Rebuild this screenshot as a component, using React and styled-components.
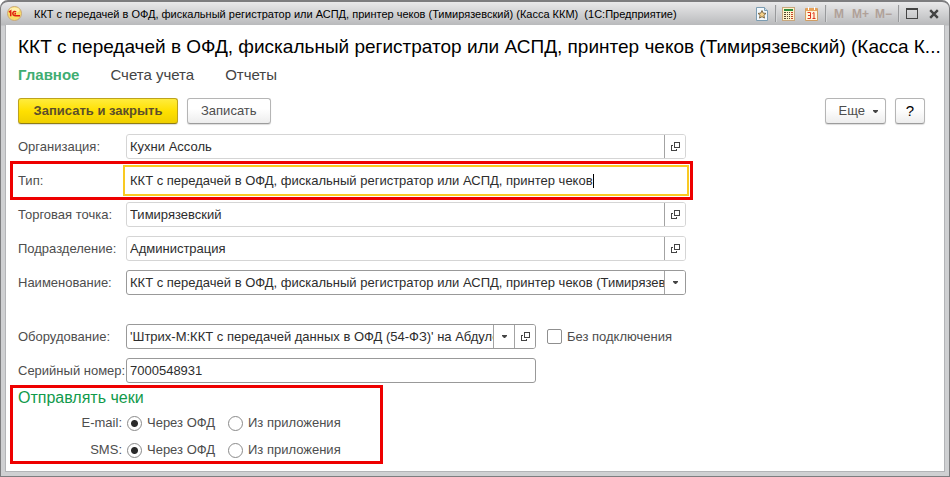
import React from "react";
import styled, { createGlobalStyle, css } from "styled-components";

const GlobalStyle = createGlobalStyle`
  *, *::before, *::after { box-sizing: border-box; }
  html, body, #root { height: 100%; }
  body { margin: 0; background: #fff; }
  body, button, input {
    font-family: "Liberation Sans", Arial, sans-serif;
    font-size: 13px;
    line-height: 16px;
  }
`;

const Window = styled.div`
  display: flex;
  flex-direction: column;
  min-height: 100%;
  padding: 0 4px 4px;
  border: 1px solid #7d7d7f;
  border-top-width: 2px;
  border-radius: 8px 8px 0 0;
  background: linear-gradient(#e9e9ea, #b9babc 23px, #cfd0d2 24px);
  overflow: hidden;
`;

const TitleBar = styled.header`
  display: flex;
  align-items: center;
  height: 23px;
  padding-left: 2px;
`;

const WindowTitle = styled.h1`
  flex: 1;
  min-width: 0;
  margin: 0 0 0 12px;
  overflow: hidden;
  white-space: pre;
  text-overflow: ellipsis;
  font-size: 11px;
  font-weight: 400;
  color: #000;
`;

const BarGroup = styled.div`
  display: flex;
  align-items: center;
  gap: ${(p) => p.$gap || 0}px;
  height: 17px;
  padding: 0 6px;
  ${(p) =>
    p.$divided &&
    css`
      border-left: 1px solid #98999b;
      box-shadow: inset 1px 0 #d6d7d9;
    `}
  &:last-child {
    padding-right: 4px;
  }
`;

const BarButton = styled.button`
  display: grid;
  place-items: center;
  min-width: 14px;
  height: 16px;
  padding: 0;
  border: 0;
  background: none;
  color: #b0a199;
  font-size: 12px;
  font-weight: 700;
`;

const Content = styled.main`
  flex: 1;
  padding: 11px 19px 7px 12px;
  border: 1px solid #b3b4b7;
  border-top: 0;
  background: #fff;
`;

const PageTitle = styled.h2`
  margin: 0 -18px 0 0;
  overflow: hidden;
  white-space: nowrap;
  font-size: 19px;
  line-height: 22px;
  font-weight: 400;
  color: #000;
`;

const Tabs = styled.nav`
  display: flex;
  gap: 31px;
  margin-top: 7px;
`;

const Tab = styled.a`
  font-size: 15px;
  line-height: 20px;
  text-decoration: none;
  color: ${(p) => (p.$active ? "#3fad72" : "#444")};
  font-weight: ${(p) => (p.$active ? 700 : 400)};
`;

const Toolbar = styled.div`
  display: flex;
  gap: 9px;
  margin-top: 13px;
`;

const Spacer = styled.div`
  flex: 1;
`;

const Button = styled.button`
  display: flex;
  align-items: center;
  justify-content: center;
  gap: 8px;
  height: 26px;
  padding: 0 ${(p) => (p.$menu ? 7 : 13)}px 0 13px;
  border: 1px solid #b5b5b5;
  border-bottom-color: #9c9c9c;
  border-radius: 3px;
  box-shadow: 0 1px 1px #ddd;
  background: linear-gradient(#fff 40%, #ededed);
  color: #4d4d4d;
  ${(p) =>
    p.$primary &&
    css`
      min-width: 160px;
      border-color: #bda31d;
      border-bottom-color: #8f7c16;
      background: linear-gradient(#ffec3d, #ffe000 50%, #efcf00);
      font-weight: 700;
      color: #5b4f2b;
    `}
  ${(p) =>
    p.$help &&
    css`
      width: 30px;
      padding: 0;
      font-size: 15px;
      color: #000;
    `}
`;

const Form = styled.form`
  display: flex;
  flex-direction: column;
  gap: 9px;
  max-width: 668px;
  margin-top: 10px;
`;

const Row = styled.div`
  display: grid;
  grid-template-columns: ${(p) => (p.$focused ? 105 : 108)}px minmax(0, 1fr);
  align-items: center;
`;

const Label = styled.label`
  white-space: nowrap;
  color: #4d4d4d;
`;

const Field = styled.div`
  display: flex;
  height: 25px;
  border: 1px solid ${(p) => (p.$strong ? "#999" : "#d5d5d5")};
  border-radius: 3px;
  background: #fff;
  overflow: hidden;
`;

const TextInput = styled.input`
  flex: 1;
  min-width: 0;
  padding: 0 0 0 3px;
  border: 0;
  outline: 0;
  background: transparent;
  color: #2d2d2d;
`;

const FieldButton = styled.button`
  display: grid;
  place-items: center;
  width: 21px;
  padding: 0;
  border: 0;
  border-left: 1px solid #a3a3a3;
  background: #fff;
`;

const FocusedField = styled(Field)`
  align-items: center;
  height: 31px;
  padding-left: 5px;
  border: 2px solid #f9c922;
  border-radius: 0;
`;

const ActiveInput = styled(TextInput)`
  flex: 0 1 auto;
  field-sizing: content;
  padding: 0;
  caret-color: transparent;
`;

const Caret = styled.span`
  width: 1px;
  height: 14px;
  background: #000;
`;

const Marked = styled.div`
  border: 3px solid #ee0000;
`;

const MarkedRow = styled(Marked)`
  margin: -7px -7px -7px -8px;
  padding: 1px 1px 1px 5px;
`;

const EquipmentLine = styled.div`
  display: flex;
  align-items: center;
  gap: 11px;
`;

const ShortField = styled(Field)`
  flex: 0 1 410px;
  width: 410px;
  max-width: 100%;
`;

const Equipment = styled.div`
  display: flex;
  flex-direction: column;
  gap: 9px;
  margin-top: 20px;
`;

const Option = styled.label`
  display: flex;
  align-items: center;
  gap: 5px;
  white-space: nowrap;
  color: #4d4d4d;
`;

const CheckBox = styled.input`
  appearance: none;
  width: 15px;
  height: 15px;
  margin: 0;
  border: 1px solid #8f8f8f;
  border-radius: 2px;
  background: #fff;
`;

const Radio = styled.input`
  appearance: none;
  width: 15px;
  height: 15px;
  margin: 0;
  border: 1px solid #8a8a8a;
  border-radius: 50%;
  background: #fff;
  &:checked {
    background: radial-gradient(circle, #2b2b2b 3px, #fff 4px);
  }
`;

const Receipts = styled(Marked)`
  align-self: flex-start;
  min-width: 373px;
  margin: -7px 0 0 -8px;
  padding: 0 5px 3px;
`;

const SectionTitle = styled.h3`
  margin: 0;
  font-size: 16px;
  line-height: 20px;
  font-weight: 400;
  color: #119a4b;
`;

const RadioList = styled.div`
  display: flex;
  flex-direction: column;
  gap: 11px;
  margin-top: 7px;
`;

const RadioRow = styled.fieldset`
  display: grid;
  grid-template-columns: 104px 96px auto;
  align-items: center;
  justify-content: start;
  column-gap: 5px;
  margin: 0;
  padding: 0;
  border: 0;
`;

const RadioCaption = styled.span`
  text-align: right;
  color: #4d4d4d;
`;

const OpenIcon = () => (
  <svg width="9" height="9" viewBox="0 0 9 9" fill="none" stroke="#444" shapeRendering="crispEdges" aria-hidden="true">
    <path d="M3.5.5h5v5h-5zM2 3.5H.5v5h5V7" />
  </svg>
);

const ArrowIcon = () => (
  <svg width="5" height="3" viewBox="0 0 5 3" aria-hidden="true">
    <path d="M0 0h5v1L3 3H2L0 1z" fill="#444" />
  </svg>
);

const LogoIcon = () => (
  <svg width="15" height="15" viewBox="0 0 15 15" aria-hidden="true">
    <circle cx="7.5" cy="7.5" r="7" fill="#f8dc67" stroke="#c9a77b" />
    <ellipse cx="7.5" cy="4" rx="5" ry="2.5" fill="#fff0ad" />
    <path d="M2 6.2 3.700 5v5.200M9 6.200C8.300 5 5.800 5.200 5.800 7.500S7.500 9.700 13 9.700M9 7.800H7.500" fill="none" stroke="#df1f12" strokeWidth="1.500" />
  </svg>
);

const FavoriteIcon = () => (
  <svg width="12" height="14" viewBox="0 0 12 14" aria-hidden="true">
    <path d="M.5.5h8l3 3v10H.5z" fill="#f3f8fb" stroke="#7b9cb2" />
    <path d="M8.500.500v3h3" fill="#cfdde6" stroke="#7b9cb2" />
    <path d="m6 3.500 1.200 2.600 2.800.3-2.100 1.900.6 2.800L6 9.700l-2.500 1.400.6-2.800L2 6.400l2.800-.3z" fill="#f7d28a" stroke="#66512f" strokeWidth=".8" />
  </svg>
);

const CalculatorIcon = () => (
  <svg width="13" height="14" viewBox="0 0 13 14" shapeRendering="crispEdges" aria-hidden="true">
    <path d="M.5.5h12v13H.5z" fill="#fff3cc" stroke="#c9a77c" />
    <path d="M2 2h9v2H2z" fill="#2e8b3d" />
    <path d="M2 5h2v1H2zM5 5h1v1H5zM7 5h1v1H7zM2 7h2v1H2zM5 7h1v1H5zM7 7h1v1H7zM2 9h2v1H2zM5 9h1v1H5zM7 9h1v1H7zM2 11h2v1H2zM5 11h1v1H5zM7 11h1v1H7z" fill="#55452f" />
    <path d="M9 5h2v1H9zM9 7h2v1H9zM9 9h2v1H9zM9 11h2v1H9z" fill="#c4422b" />
  </svg>
);

const CalendarIcon = () => (
  <svg width="13" height="14" viewBox="0 0 13 14" aria-hidden="true">
    <path d="M.5 1.500h12v12H.5z" fill="#fff5da" stroke="#cf9d63" />
    <path d="M1 1h11v3H1z" fill="#e8a25a" />
    <path d="M3 0h1v3H3zM9 0h1v3H9z" fill="#fff" />
    <path d="M2.500 5.500h3v6h-3M3 8.500h2.500M7.500 6.500l1.500-1v6M7.500 11.500h3" fill="none" stroke="#e0341d" />
  </svg>
);

const MaximizeIcon = () => (
  <svg width="12" height="11" viewBox="0 0 12 11" shapeRendering="crispEdges" aria-hidden="true">
    <path d="M.5 1v9.500h11V1" fill="none" stroke="#444" />
    <path d="M0 0h12v2H0z" fill="#444" />
  </svg>
);

const CloseIcon = () => (
  <svg width="10" height="10" viewBox="0 0 10 10" aria-hidden="true">
    <path d="m1.200 1.200 7.600 7.600m0-7.600L1.200 8.800" stroke="#444" strokeWidth="2.400" />
  </svg>
);

function LookupRow({ id, label, value, strong, icon }) {
  return (
    <Row>
      <Label htmlFor={id}>{label}</Label>
      <Field $strong={strong}>
        <TextInput id={id} defaultValue={value} />
        <FieldButton type="button" aria-label={strong ? "Выбрать" : "Открыть"}>
          {icon}
        </FieldButton>
      </Field>
    </Row>
  );
}

function ChannelRow({ name, caption }) {
  return (
    <RadioRow aria-label={caption}>
      <RadioCaption>{caption}:</RadioCaption>
      <Option>
        <Radio type="radio" name={name} defaultChecked />
        Через ОФД
      </Option>
      <Option>
        <Radio type="radio" name={name} />
        Из приложения
      </Option>
    </RadioRow>
  );
}

const DEVICE = "ККТ с передачей в ОФД, фискальный регистратор или АСПД, принтер чеков";

export default function App() {
  return (
    <>
      <GlobalStyle />
      <Window>
        <TitleBar>
          <LogoIcon />
          <WindowTitle>{`${DEVICE} (Тимирязевский) (Касса ККМ)  (1С:Предприятие)`}</WindowTitle>
          <BarGroup>
            <BarButton aria-label="Избранное"><FavoriteIcon /></BarButton>
          </BarGroup>
          <BarGroup $divided $gap={9}>
            <BarButton aria-label="Калькулятор"><CalculatorIcon /></BarButton>
            <BarButton aria-label="Календарь"><CalendarIcon /></BarButton>
          </BarGroup>
          <BarGroup $divided $gap={6}>
            <BarButton>M</BarButton>
            <BarButton>M+</BarButton>
            <BarButton>M−</BarButton>
          </BarGroup>
          <BarGroup $divided $gap={8}>
            <BarButton aria-label="Развернуть"><MaximizeIcon /></BarButton>
            <BarButton aria-label="Закрыть"><CloseIcon /></BarButton>
          </BarGroup>
        </TitleBar>
        <Content>
          <PageTitle>{`${DEVICE} (Тимирязевский) (Касса К...`}</PageTitle>
          <Tabs>
            <Tab href="#main" $active>Главное</Tab>
            <Tab href="#accounts">Счета учета</Tab>
            <Tab href="#reports">Отчеты</Tab>
          </Tabs>
          <Toolbar>
            <Button type="button" $primary>Записать и закрыть</Button>
            <Button type="button">Записать</Button>
            <Spacer />
            <Button type="button" $menu>
              Еще <ArrowIcon />
            </Button>
            <Button type="button" $help>?</Button>
          </Toolbar>
          <Form>
            <LookupRow id="org" label="Организация:" value="Кухни Ассоль" icon={<OpenIcon />} />
            <MarkedRow>
              <Row $focused>
                <Label htmlFor="type">Тип:</Label>
                <FocusedField>
                  <ActiveInput id="type" defaultValue={DEVICE} />
                  <Caret />
                </FocusedField>
              </Row>
            </MarkedRow>
            <LookupRow id="shop" label="Торговая точка:" value="Тимирязевский" icon={<OpenIcon />} />
            <LookupRow id="unit" label="Подразделение:" value="Администрация" icon={<OpenIcon />} />
            <LookupRow id="name" label="Наименование:" value={`${DEVICE} (Тимирязевский)`} strong icon={<ArrowIcon />} />
            <Equipment>
              <Row>
                <Label htmlFor="device">Оборудование:</Label>
                <EquipmentLine>
                  <ShortField $strong>
                    <TextInput id="device" defaultValue="'Штрих-М:ККТ с передачей данных в ОФД (54-ФЗ)' на Абдулова" />
                    <FieldButton type="button" aria-label="Выбрать"><ArrowIcon /></FieldButton>
                    <FieldButton type="button" aria-label="Открыть"><OpenIcon /></FieldButton>
                  </ShortField>
                  <Option>
                    <CheckBox type="checkbox" />
                    Без подключения
                  </Option>
                </EquipmentLine>
              </Row>
              <Row>
                <Label htmlFor="serial">Серийный номер:</Label>
                <ShortField $strong>
                  <TextInput id="serial" defaultValue="7000548931" />
                </ShortField>
              </Row>
            </Equipment>
            <Receipts>
              <SectionTitle>Отправлять чеки</SectionTitle>
              <RadioList>
                <ChannelRow name="email" caption="E-mail" />
                <ChannelRow name="sms" caption="SMS" />
              </RadioList>
            </Receipts>
          </Form>
        </Content>
      </Window>
    </>
  );
}
